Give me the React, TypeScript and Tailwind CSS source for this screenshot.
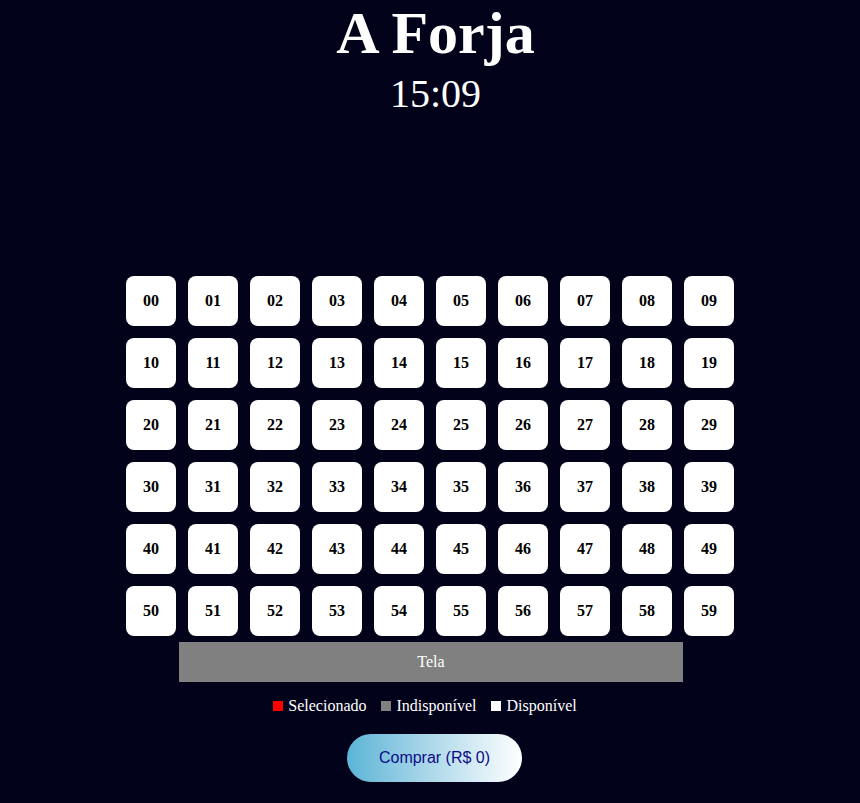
import { useState } from 'react'

const serif = { fontFamily: '"Liberation Serif", "Times New Roman", serif' }

export default function App() {
  const [selected] = useState<number[]>([])
  const seats = Array.from({ length: 60 }, (_, i) => i)

  return (
    <div className="min-h-[803px] w-full bg-[#02021a] text-white" style={serif}>
      <div className="flex flex-col items-center">
        <h1 className="pl-[11px] text-[60px] font-bold leading-[66px]">A Forja</h1>
        <p className="mt-[6px] pl-[11px] text-[40px] leading-[44px]">15:09</p>

        <div className="mt-[160px] grid grid-cols-10 gap-[12px]">
          {seats.map((n) => (
            <button
              key={n}
              className={
                'flex h-[50px] w-[50px] items-center justify-center rounded-[8px] text-[16px] font-bold text-black ' +
                (selected.includes(n) ? 'bg-[#ff0000]' : 'bg-white')
              }
              style={serif}
            >
              {String(n).padStart(2, '0')}
            </button>
          ))}
        </div>

        <div className="mt-[6px] ml-[2px] flex h-[40px] w-[504px] items-center justify-center bg-[#808080] text-[16px]">
          Tela
        </div>

        <div className="mt-[15px] flex items-center gap-[15px] pr-[10px] text-[16px] leading-[18px]">
          <span className="flex items-center gap-[5px]">
            <span className="h-[10px] w-[10px] bg-[#ff0000]" />
            Selecionado
          </span>
          <span className="flex items-center gap-[5px]">
            <span className="h-[10px] w-[10px] bg-[#808080]" />
            Indisponível
          </span>
          <span className="flex items-center gap-[5px]">
            <span className="h-[10px] w-[10px] bg-white" />
            Disponível
          </span>
        </div>

        <button
          className="mt-[19px] ml-[9px] h-[48px] w-[175px] rounded-full bg-gradient-to-r from-[#5ab4d6] to-white text-[16px] text-[#0c0c86]"
          style={{ fontFamily: '"Liberation Sans", Arial, sans-serif' }}
        >
          Comprar (R$ 0)
        </button>
      </div>
    </div>
  )
}
